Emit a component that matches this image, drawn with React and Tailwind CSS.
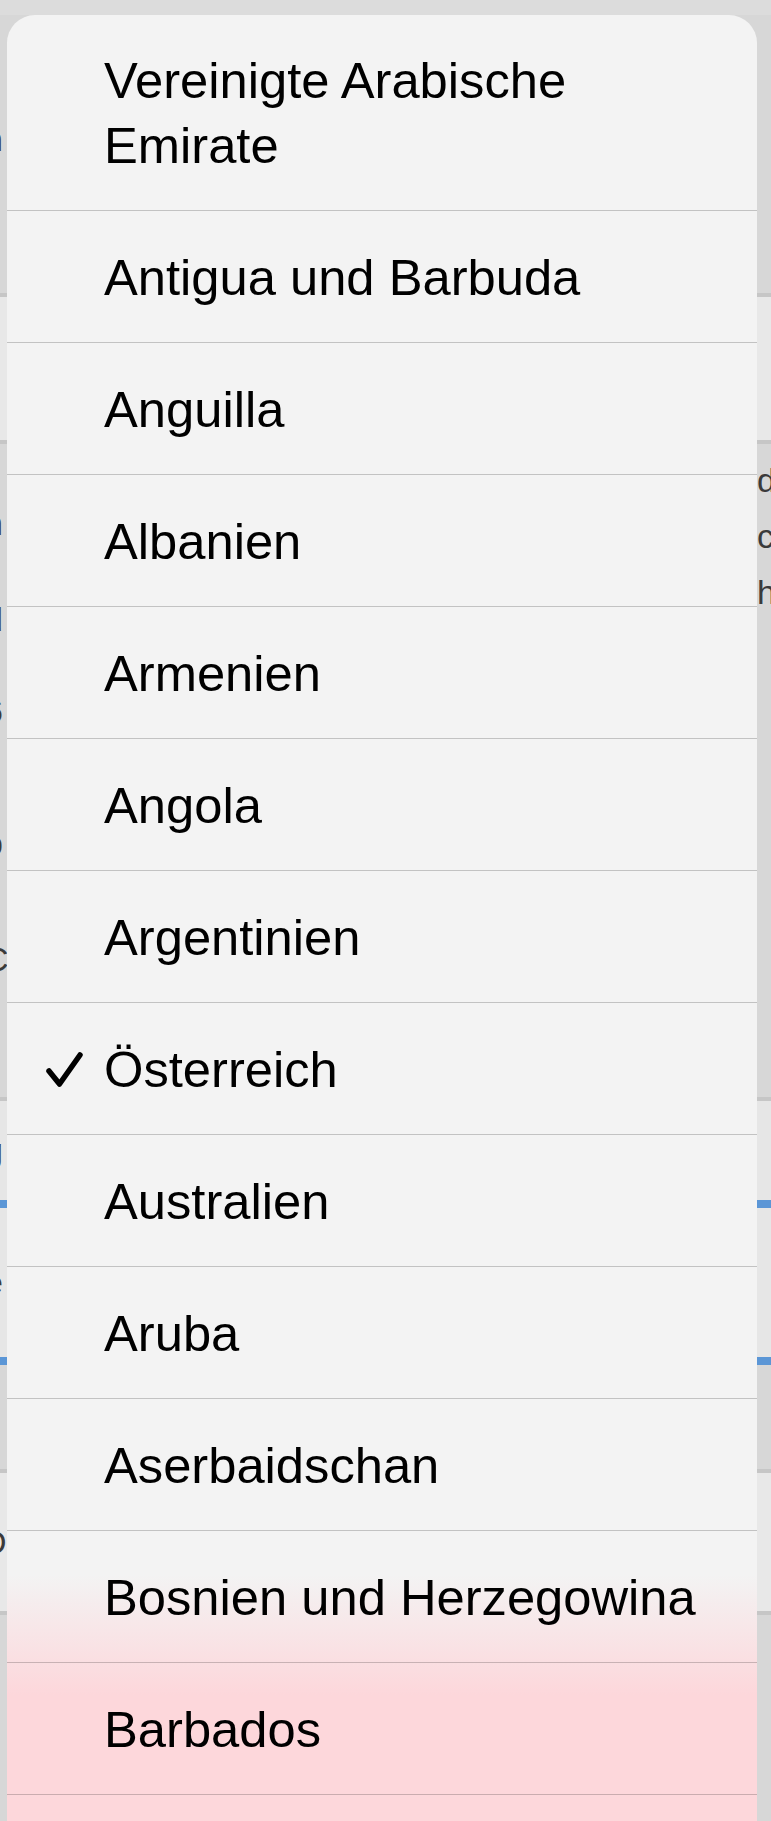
import React from 'react';

// Länderauswahl (iOS-Popup über einer abgedunkelten Seite)

const countries = [
  'Vereinigte Arabische Emirate',
  'Antigua und Barbuda',
  'Anguilla',
  'Albanien',
  'Armenien',
  'Angola',
  'Argentinien',
  'Österreich',
  'Australien',
  'Aruba',
  'Aserbaidschan',
  'Bosnien und Herzegowina',
  'Barbados',
  'Belgien',
];

const selected = 'Österreich';

const CheckIcon = () => (
  <svg width="38" height="38" viewBox="0 0 38 38" fill="none">
    <path d="M4 20 L14.5 33 L35 4" stroke="#000" strokeWidth="5.5" strokeLinecap="round" strokeLinejoin="round" />
  </svg>
);

// Seite hinter dem Popup, nur an den Rändern sichtbar
const BackgroundPage = () => (
  <div className="flex flex-col w-full text-[34px] text-[#3a3a3a]">
    <div className="h-[15px] bg-[#dcdcdc]" />
    <div className="h-[278px] bg-[#d7d7d7] flex items-center">
      <span className="-ml-[16px] mt-[-30px]">n</span>
    </div>
    <div className="h-[4px] bg-[#c6c6c6]" />
    <div className="h-[143px] bg-[#e8e8e8]" />
    <div className="h-[4px] bg-[#c6c6c6]" />
    <div className="h-[653px] bg-[#d7d7d7] flex justify-between">
      <div className="flex flex-col leading-[46px] -ml-[16px]">
        <span className="mt-[10px]">,</span>
        <span>n</span>
        <span className="mt-[50px]">d</span>
        <span className="mt-[46px]">6</span>
        <span className="mt-[86px]">p</span>
        <span className="mt-[70px]">C</span>
      </div>
      <div className="flex flex-col leading-[56px] w-[14px] overflow-hidden mt-[8px]">
        <span>d</span>
        <span>c</span>
        <span>h</span>
      </div>
    </div>
    <div className="h-[4px] bg-[#c6c6c6]" />
    <div className="h-[99px] bg-[#e6e6e6] flex items-center">
      <span className="-ml-[16px]">g</span>
    </div>
    <div className="h-[8px] bg-[#5b96d6]" />
    <div className="h-[149px] bg-[#e6e6e6] flex items-center">
      <span className="-ml-[16px]">e</span>
    </div>
    <div className="h-[8px] bg-[#5b96d6]" />
    <div className="h-[104px] bg-[#d7d7d7]" />
    <div className="h-[4px] bg-[#c6c6c6]" />
    <div className="h-[138px] bg-[#e8e8e8] flex items-center">
      <span className="-ml-[18px]">D</span>
    </div>
    <div className="h-[4px] bg-[#c6c6c6]" />
    <div className="h-[206px] bg-[#d7d7d7]" />
  </div>
);

const CountryRow = ({ name, first }) => (
  <div
    className={`flex items-start border-b border-black/20 pl-[38px] pr-[20px] ${first ? 'pt-[33px] pb-[32px]' : 'pt-[34px] pb-[32px]'}`}
  >
    <div className="w-[59px] h-[65px] flex items-center shrink-0">
      {name === selected && <CheckIcon />}
    </div>
    <span className="text-[50.7px] leading-[65px] text-black">{name}</span>
  </div>
);

export default function App() {
  return (
    <div className="relative w-[771px] h-[1821px] overflow-hidden font-['Liberation_Sans',Arial,sans-serif]">
      <BackgroundPage />
      <div className="absolute top-[15px] left-[7px] w-[750px] h-[1806px] rounded-t-[28px] overflow-hidden bg-[linear-gradient(to_bottom,#f3f3f3_0px,#f3f3f3_1560px,#fdd7db_1680px,#fdd7db_100%)]">
        {countries.map((c, i) => (
          <CountryRow key={c} name={c} first={i === 0} />
        ))}
      </div>
    </div>
  );
}
